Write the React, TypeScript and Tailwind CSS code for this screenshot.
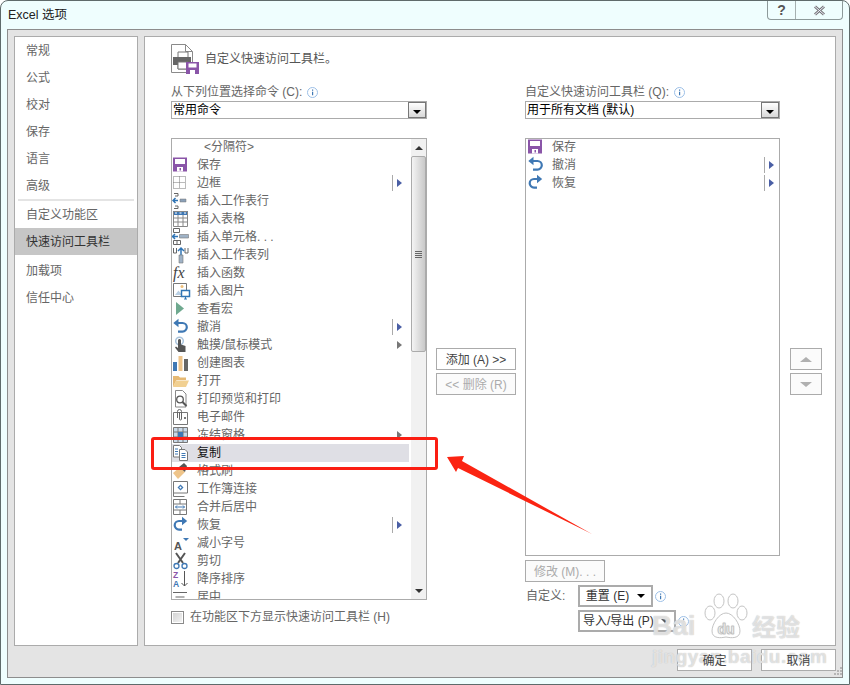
import React from 'react';

const FONT = '"Liberation Sans", "Noto Sans CJK SC", sans-serif';

const Svg = ({ children }: { children: React.ReactNode }) => (
  <svg width="20" height="18" viewBox="0 0 20 18" fill="none" className="block shrink-0">
    {children}
  </svg>
);

const SaveIcon = () => (
  <Svg>
    <path d="M1 1.500h14v14H1z" fill="#8a55a8" />
    <path d="M3 3h10v5H3z" fill="#fff" />
    <path d="M5 11h6v4.500H5z" fill="#fff" />
    <path d="M7.500 12h1.500v2.500H7.500z" fill="#8a55a8" />
  </Svg>
);
const BorderIcon = () => (
  <Svg>
    <path d="M1.500 2.500h12v12h-12zM7.500 2.500v12M1.500 8.500h12" stroke="#777" strokeDasharray="1 1" />
  </Svg>
);
const InsertRowIcon = () => (
  <Svg>
    <path d="M2 1.500h4v2.500H3M3 14h3v2.500H2" stroke="#666" />
    <path d="M1 8.500h5M3.500 6L1 8.500 3.500 11" stroke="#2f74b5" strokeWidth="1.500" />
    <path d="M8 7h6v3H8z" fill="#8aa0b8" stroke="#777" strokeWidth="0.500" />
  </Svg>
);
const TableIcon = () => (
  <Svg>
    <path d="M1 1h15v4H1z" fill="#3f78b4" />
    <path d="M1.500 1.500h14v15h-14zM1.500 8h14M1.500 12h14M6 5v11M11 5v11" stroke="#888" />
    <path d="M3 2.500h2v1H3zM7.500 2.500h2v1h-2zM12 2.500h2v1h-2z" fill="#fff" />
  </Svg>
);
const InsertCellIcon = () => (
  <Svg>
    <path d="M1.500 .5h6v4h-6zM1.500 12.500h7v4h-7zM5 12.500v4" stroke="#666" />
    <path d="M0 8.500h6M3 6L.5 8.500 3 11" stroke="#2f74b5" strokeWidth="1.500" />
    <path d="M7.500 6.500h9v3.500h-9z" fill="#9fb2c6" stroke="#777" strokeWidth="0.600" />
  </Svg>
);
const InsertColIcon = () => (
  <Svg>
    <path d="M1.500 2v5h3V2M13 2v5h3V2" stroke="#666" />
    <path d="M9 10V2M6 5l3-3 3 3" stroke="#2f74b5" strokeWidth="1.500" />
    <path d="M7 9h4v8H7z" fill="#9fb2c6" stroke="#777" strokeWidth="0.600" />
  </Svg>
);
const FxIcon = () => (
  <Svg>
    <text x="1" y="14" fontFamily='"Liberation Serif", serif' fontStyle="italic" fontSize="16" fill="#444">
      fx
    </text>
  </Svg>
);
const PictureIcon = () => (
  <Svg>
    <path d="M1.500 1.500h13v13h-13z" stroke="#777" fill="#fff" />
    <path d="M3 13l3.500-4.500L10 13z" fill="#b8cfe4" />
    <circle cx="10" cy="4.500" r="1.500" fill="#eebf7a" />
    <path d="M9.500 8.500h8v6h-8z" fill="#fff" stroke="#2f74b5" strokeWidth="1.500" />
    <path d="M12 17h3M13.500 14.500V17" stroke="#2f74b5" />
  </Svg>
);
const PlayIcon = () => (
  <Svg>
    <path d="M4 2l8 6.500L4 15z" fill="#6fa98f" />
  </Svg>
);
const UndoIcon = () => (
  <Svg>
    <path d="M3 5h7.500a4.300 4.300 0 0 1 0 8.600H6" stroke="#3f78b4" strokeWidth="2.200" />
    <path d="M6.500 0.800L1.300 5l5.200 4.300z" fill="#3f78b4" />
  </Svg>
);
const TouchIcon = () => (
  <Svg>
    <circle cx="7.500" cy="5" r="3.800" stroke="#a9c3dc" strokeWidth="1.500" />
    <path d="M6 4.500c0-2 3-2 3 0v4l4.500 1.500V16H6.500L3 11.500l1-1L6 12z" fill="#555" />
  </Svg>
);
const ChartIcon = () => (
  <Svg>
    <path d="M1 8h4v9H1z" fill="#3f78b4" />
    <path d="M6.500 2h4v15h-4z" fill="#eec48a" />
    <path d="M12 5h4v12h-4z" fill="#666" />
  </Svg>
);
const OpenIcon = () => (
  <Svg>
    <path d="M1 4h5.500l1.500 1.500h6V8H4.500L1 15z" fill="#e6b973" />
    <path d="M4 8.500h13l-3 6.500H1z" fill="#f1d092" />
  </Svg>
);
const PreviewIcon = () => (
  <Svg>
    <path d="M3.500 .5h7l3.500 3.500v13h-10.500z" stroke="#888" fill="#fff" />
    <circle cx="8" cy="9.500" r="3.300" stroke="#555" strokeWidth="1.300" />
    <path d="M10.500 12l4 4" stroke="#555" strokeWidth="2" />
  </Svg>
);
const MailIcon = () => (
  <Svg>
    <path d="M1.500 4.500h14v12h-14z" stroke="#777" fill="#fff" />
    <path d="M5.500 10V3.500a2 2 0 0 1 4 0V11a1 1 0 0 1-2 0V4" stroke="#666" />
    <path d="M12 9h2v2h-2z" fill="#777" />
  </Svg>
);
const FreezeIcon = () => (
  <Svg>
    <path d="M1.500 1.500h14v15h-14z" stroke="#777" fill="#c9d9e8" />
    <path d="M1.500 6h14M1.500 11h14M6 1.500v15M11 1.500v15" stroke="#777" />
    <path d="M6 6h5v5H6z" fill="#3f78b4" />
  </Svg>
);
const CopyIcon = () => (
  <Svg>
    <path d="M1.500 1.500h6l2 2V13h-8z" stroke="#777" fill="#fff" />
    <path d="M7.500 5.500h5.500l2.500 2.500v8.500h-8z" stroke="#777" fill="#fff" />
    <path d="M9.500 9.500h4M9.500 11.500h4M9.500 13.500h4M3 5h3M3 7.500h3M3 10h3" stroke="#3f78b4" />
  </Svg>
);
const BrushIcon = () => (
  <Svg>
    <path d="M1 11l7-6 5 5-7 7z" fill="#eec48a" />
    <path d="M7 5l5-4 3 3-2 6z" fill="#555" />
  </Svg>
);
const WorkbookIcon = () => (
  <Svg>
    <path d="M1.500 1.500h14v11.500h-14zM1.500 13v3.500h11" stroke="#777" />
    <path d="M8.500 4.500l3 3-3 3-3-3z" fill="#3f78b4" />
    <path d="M8.500 6.300l1.200 1.200-1.200 1.200-1.200-1.200z" fill="#fff" />
  </Svg>
);
const MergeIcon = () => (
  <Svg>
    <path d="M1.500 1.500h13v15h-13zM1.500 6h13M1.500 12h13M8 1.500V6M8 12v4.500" stroke="#777" />
    <path d="M3.500 9h9M5 7.500L3.500 9 5 10.500M11 7.500L12.500 9 11 10.500" stroke="#3f78b4" />
  </Svg>
);
const RedoIcon = () => (
  <Svg>
    <path d="M13 5H7a4.300 4.300 0 0 0 0 8.600h3" stroke="#3f78b4" strokeWidth="2.200" />
    <path d="M10 0.800L15.200 5 10 9.300z" fill="#3f78b4" />
  </Svg>
);
const ShrinkFontIcon = () => (
  <Svg>
    <text x="2" y="16" fontFamily='"Liberation Sans", sans-serif' fontWeight="700" fontSize="11" fill="#555">
      A
    </text>
    <path d="M11 4h6l-3 3z" fill="#3f78b4" />
  </Svg>
);
const ScissorsIcon = () => (
  <Svg>
    <path d="M4 1l7 10M13 1L6 11" stroke="#555" strokeWidth="2" />
    <circle cx="4.500" cy="14" r="2.500" stroke="#3f78b4" strokeWidth="1.300" />
    <circle cx="12.500" cy="14" r="2.500" stroke="#3f78b4" strokeWidth="1.300" />
  </Svg>
);
const SortIcon = () => (
  <Svg>
    <text x="1" y="8" fontFamily='"Liberation Sans", sans-serif' fontWeight="700" fontSize="8.500" fill="#8a55a8">
      Z
    </text>
    <text x="1" y="17" fontFamily='"Liberation Sans", sans-serif' fontWeight="700" fontSize="8.500" fill="#3f78b4">
      A
    </text>
    <path d="M12.500 1v15M9.500 13l3 3 3-3" stroke="#555" />
  </Svg>
);
const CenterIcon = () => (
  <Svg>
    <path d="M1 4.500h14M3.500 9h9M1 13.500h14" stroke="#666" strokeWidth="1.200" />
  </Svg>
);

const InfoIcon = () => (
  <svg width="11" height="11" viewBox="0 0 11 11" className="block shrink-0">
    <circle cx="5.500" cy="5.500" r="5" fill="#fff" stroke="#9cbfe6" />
    <path d="M5 2.500h1.200v1.200H5zM5 4.800h1.200v3.500H5z" fill="#3f78b4" />
  </svg>
);

const SubArrow = ({ line }: { line?: boolean }) => (
  <span className="flex items-center gap-[4px]">
    <span className={line ? 'h-[16px] w-px bg-[#aaaaaa]' : 'h-[16px] w-px'} />
    <span
      className={
        line
          ? 'h-0 w-0 border-y-[4px] border-l-[5px] border-y-transparent border-l-[#4a5fa5]'
          : 'h-0 w-0 border-y-[4px] border-l-[5px] border-y-transparent border-l-[#777777]'
      }
    />
  </span>
);

type Row = {
  label: string;
  icon?: React.ReactNode;
  sub?: 'line' | 'plain';
  active?: boolean;
  indent?: boolean;
};

const commands: Row[] = [
  { label: '<分隔符>', indent: true },
  { label: '保存', icon: <SaveIcon /> },
  { label: '边框', icon: <BorderIcon />, sub: 'line' },
  { label: '插入工作表行', icon: <InsertRowIcon /> },
  { label: '插入表格', icon: <TableIcon /> },
  { label: '插入单元格. . .', icon: <InsertCellIcon /> },
  { label: '插入工作表列', icon: <InsertColIcon /> },
  { label: '插入函数', icon: <FxIcon /> },
  { label: '插入图片', icon: <PictureIcon /> },
  { label: '查看宏', icon: <PlayIcon /> },
  { label: '撤消', icon: <UndoIcon />, sub: 'line' },
  { label: '触摸/鼠标模式', icon: <TouchIcon />, sub: 'plain' },
  { label: '创建图表', icon: <ChartIcon /> },
  { label: '打开', icon: <OpenIcon /> },
  { label: '打印预览和打印', icon: <PreviewIcon /> },
  { label: '电子邮件', icon: <MailIcon /> },
  { label: '冻结窗格', icon: <FreezeIcon />, sub: 'plain' },
  { label: '复制', icon: <CopyIcon />, active: true },
  { label: '格式刷', icon: <BrushIcon /> },
  { label: '工作簿连接', icon: <WorkbookIcon /> },
  { label: '合并后居中', icon: <MergeIcon /> },
  { label: '恢复', icon: <RedoIcon />, sub: 'line' },
  { label: '减小字号', icon: <ShrinkFontIcon /> },
  { label: '剪切', icon: <ScissorsIcon /> },
  { label: '降序排序', icon: <SortIcon /> },
  { label: '居中', icon: <CenterIcon /> },
];

const toolbarItems: Row[] = [
  { label: '保存', icon: <SaveIcon /> },
  { label: '撤消', icon: <UndoIcon />, sub: 'line' },
  { label: '恢复', icon: <RedoIcon />, sub: 'line' },
];

const sideTop = ['常规', '公式', '校对', '保存', '语言', '高级'];

const CommandRow = ({ row }: { row: Row }) => (
  <div
    className={
      row.active
        ? 'flex h-[18px] shrink-0 items-center bg-[#dfdfe5] pr-[7px] text-[#111111]'
        : 'flex h-[18px] shrink-0 items-center pr-[7px] text-[#666666]'
    }
  >
    <span className={row.indent ? 'w-[32px] shrink-0' : 'w-[25px] shrink-0'}>{row.icon}</span>
    <span className="flex-1 whitespace-nowrap">{row.label}</span>
    {row.sub && <SubArrow line={row.sub === 'line'} />}
  </div>
);

const Combo = ({ value }: { value: string }) => (
  <div className="flex h-[18px] items-center justify-between border border-[#ababab] bg-white pl-px text-black">
    <span className="whitespace-nowrap">{value}</span>
    <span className="flex h-[16px] w-[18px] items-end justify-center border border-[#777777] bg-linear-to-b from-white to-[#d8d8d8] pb-[3px]">
      <span className="h-0 w-0 border-x-[4px] border-t-[4px] border-x-transparent border-t-black" />
    </span>
  </div>
);

const Label = ({ text }: { text: string }) => (
  <div className="flex h-[18px] items-center gap-[5px] text-[#666666]">
    <span className="whitespace-nowrap">{text}</span>
    <InfoIcon />
  </div>
);

const Button = ({ text, disabled, className }: { text: string; disabled?: boolean; className: string }) => (
  <div
    className={
      (disabled ? 'bg-[#fbfbfb] text-[#ababab] ' : 'bg-white text-[#444444] ') +
      'flex h-[22px] items-center justify-center whitespace-nowrap border border-[#ababab] pt-[2px] ' +
      className
    }
  >
    <span className="relative z-10">{text}</span>
  </div>
);

const MoveButton = ({ up }: { up?: boolean }) => (
  <div className="flex h-[22px] w-[32px] items-center justify-center border border-[#ababab] bg-[#fbfbfb]">
    <span
      className={
        up
          ? 'h-0 w-0 border-x-[6px] border-b-[5px] border-x-transparent border-b-[#b0b0b0]'
          : 'h-0 w-0 border-x-[6px] border-t-[5px] border-x-transparent border-t-[#b0b0b0]'
      }
    />
  </div>
);

const Scrollbar = () => (
  <div className="flex w-[15px] shrink-0 flex-col items-center bg-[#f1f1f1]">
    <div className="flex h-[17px] shrink-0 items-center justify-center">
      <span className="h-0 w-0 border-x-[4px] border-b-[4px] border-x-transparent border-b-[#333333]" />
    </div>
    <div className="flex h-[196px] w-[15px] shrink-0 flex-col items-center justify-center gap-px rounded-[2px] border border-[#ababab] bg-linear-to-r from-[#f4f4f4] to-[#c9c9c9]">
      <span className="h-px w-[7px] bg-[#666666]" />
      <span className="h-px w-[7px] bg-[#666666]" />
      <span className="h-px w-[7px] bg-[#666666]" />
      <span className="h-px w-[7px] bg-[#666666]" />
    </div>
    <div className="flex-1" />
    <div className="flex h-[17px] shrink-0 items-center justify-center">
      <span className="h-0 w-0 border-x-[4px] border-t-[4px] border-x-transparent border-t-[#333333]" />
    </div>
  </div>
);

export default function App() {
  return (
    <div
      className="relative flex h-[685px] w-[850px] flex-col overflow-hidden rounded-t-[8px] border border-[#5f6b6b] bg-[#effefe] text-[12px] leading-none"
      style={{ fontFamily: FONT }}
    >
      <div className="flex h-[28px] shrink-0 items-start justify-between pl-[7px] pr-[6px]">
        <span className="mt-[8px] whitespace-nowrap text-[12.500px] text-[#222222]">Excel 选项</span>
        <div className="flex h-[19px] w-[76px] rounded-b-[4px] border border-t-0 border-[#8d9a9a] text-[#555555]">
          <span className="flex w-[28px] items-center justify-center border-r border-[#a5b0b0] text-[14px] font-bold">
            ?
          </span>
          <span className="flex flex-1 items-center justify-center">
            <svg width="13" height="11" viewBox="0 0 13 11">
              <path d="M2 1.500l9 8M11 1.500l-9 8" stroke="#777" strokeWidth="3" />
              <path d="M2 1.500l9 8M11 1.500l-9 8" stroke="#eef" strokeWidth="1" />
            </svg>
          </span>
        </div>
      </div>

      <div className="ml-[6px] mr-[6px] flex h-[649px] shrink-0 flex-col border border-[#8d8d8d] bg-[#e4e4e4] px-[6px] pt-[6px]">
        <div className="flex h-[610px] shrink-0 gap-[6px]">
          <div className="w-[124px] shrink-0 border border-[#ababab] bg-white text-[#666666]">
            {sideTop.map((s) => (
              <div key={s} className="flex h-[27px] items-center pl-[11px]">
                {s}
              </div>
            ))}
            <div className="mx-[3px] h-[2px] bg-[#e4e4e4]" />
            <div className="flex h-[27px] items-center pl-[11px]">自定义功能区</div>
            <div className="flex h-[27px] items-center bg-[#c6c6c6] pl-[11px] text-[#333333]">快速访问工具栏</div>
            <div className="mt-[2px] flex h-[27px] items-center pl-[11px]">加载项</div>
            <div className="flex h-[27px] items-center pl-[11px]">信任中心</div>
          </div>

          <div className="flex-1 border border-[#ababab] bg-white pl-[26px] pt-[7px]">
            <div className="flex h-[39px] items-start">
              <svg width="28" height="30" viewBox="0 0 28 30" className="block shrink-0">
                <path d="M.5.5h14l7 7v21H.5z" fill="#fff" stroke="#8a8a8a" />
                <path d="M14.500.5v7h7" fill="none" stroke="#8a8a8a" />
                <path d="M7 8h10v6H7zM7 19h10v6H7z" fill="#fff" stroke="#777" />
                <path d="M2 13h18v8H2z" fill="#666" />
                <path d="M7 18h10v7H7z" fill="#fff" stroke="#777" />
                <path d="M15 18h13v12H15z" fill="#8a55a8" />
                <path d="M17.500 19.500h8v4h-8zM19 26h5v4h-5z" fill="#fff" />
              </svg>
              <span className="ml-[6px] mt-[9px] whitespace-nowrap text-[#555555]">自定义快速访问工具栏。</span>
            </div>

            <div className="flex">
              <div className="w-[256px] shrink-0">
                <Label text="从下列位置选择命令 (C):" />
                <Combo value="常用命令" />
                <div className="mt-[19px] flex h-[462px] border border-[#ababab] bg-white">
                  <div className="-mt-px flex flex-1 flex-col overflow-hidden pb-px pr-[2px]">
                    {commands.map((row) => (
                      <CommandRow key={row.label} row={row} />
                    ))}
                  </div>
                  <Scrollbar />
                </div>
                <div className="mt-[9px] flex h-[16px] items-center text-[#666666]">
                  <span className="flex h-[13px] w-[13px] items-center justify-center border border-[#8a8a8a] bg-white">
                    <span className="h-[9px] w-[9px] bg-linear-to-br from-[#d4d4d4] to-[#f2f2f2]" />
                  </span>
                  <span className="ml-[6px] whitespace-nowrap">在功能区下方显示快速访问工具栏 (H)</span>
                </div>
              </div>

              <div className="w-[98px] shrink-0 pl-[9px] pt-[265px]">
                <Button text="添加 (A) >>" className="w-[80px]" />
                <Button text="<< 删除 (R)" disabled className="mt-[3px] w-[80px]" />
              </div>

              <div className="w-[255px] shrink-0">
                <Label text="自定义快速访问工具栏 (Q):" />
                <Combo value="用于所有文档 (默认)" />
                <div className="mt-[19px] flex h-[418px] flex-col border border-[#ababab] bg-white pl-px">
                  <div className="-mr-[2px] -mt-px">
                    {toolbarItems.map((row) => (
                      <CommandRow key={row.label} row={row} />
                    ))}
                  </div>
                </div>
                <Button text="修改 (M). . ." disabled className="mt-[4px] w-[80px]" />
                <div className="mt-[3px] flex items-center">
                  <span className="w-[53px] pl-px text-[#666666]">自定义:</span>
                  <div className="flex h-[22px] w-[75px] items-center justify-center gap-[8px] border-[2px] border-[#ababab] text-[#333333]">
                    <span className="whitespace-nowrap">重置 (E)</span>
                    <span className="h-0 w-0 border-x-[4px] border-t-[4px] border-x-transparent border-t-black" />
                  </div>
                  <span className="ml-[2px]">
                    <InfoIcon />
                  </span>
                </div>
                <div className="mt-[3px] flex items-center pl-[53px]">
                  <div className="flex h-[22px] w-[98px] items-center justify-between border-[2px] border-[#ababab] pl-[3px] pr-[5px] text-[#333333]">
                    <span className="whitespace-nowrap">导入/导出 (P)</span>
                    <span className="h-0 w-0 border-x-[4px] border-t-[4px] border-x-transparent border-t-[#555555]" />
                  </div>
                  <span className="ml-[2px]">
                    <InfoIcon />
                  </span>
                </div>
              </div>

              <div className="ml-[10px] flex w-[32px] shrink-0 flex-col gap-[3px] pt-[265px]">
                <MoveButton up />
                <MoveButton />
              </div>
            </div>
          </div>
        </div>

        <div className="flex justify-end gap-[9px] pt-[3px]">
          <Button text="确定" className="w-[75px]" />
          <Button text="取消" className="w-[75px]" />
        </div>
      </div>

      {/* red annotation */}
      <div className="absolute left-[150px] top-[436px] h-[33px] w-[287px] rounded-[3px] border-[3px] border-[#fb1e13]" />
      <svg width="850" height="685" className="pointer-events-none absolute left-[-1px] top-[-1px]">
        <path d="M447 457l17-1-2 5 130 73-134-66-2 4z" fill="#fb2412" />
      </svg>

      {/* resize grip */}
      <svg width="10" height="10" viewBox="0 0 10 10" className="absolute left-[832px] top-[665px]">
        <path d="M7 1h2v2H7zM4 4h2v2H4zM7 4h2v2H7zM1 7h2v2H1zM4 7h2v2H4zM7 7h2v2H7z" fill="#b5b5b5" />
      </svg>

      {/* watermark */}
      <div className="pointer-events-none absolute left-[651px] top-[592px] flex w-[160px] flex-col text-white/60 [text-shadow:0_0_1px_#b0b0b0]">
        <div className="flex items-end">
          <span className="w-[51px] text-[28px] font-bold leading-none">Bai</span>
          <svg width="46" height="47" viewBox="0 0 46 47" className="block shrink-0">
            <g fill="#fff" fillOpacity="0.55" stroke="#c4c4c4">
              <ellipse cx="7" cy="20" rx="5" ry="7" />
              <ellipse cx="16" cy="8" rx="5" ry="7" />
              <ellipse cx="30" cy="8" rx="5" ry="7" />
              <ellipse cx="39" cy="20" rx="5" ry="7" />
              <path d="M23 20c-7 0-14 11-14 18 0 8 9 7 14 6 5 1 14 2 14-6 0-7-7-18-14-18z" />
            </g>
            <text x="23" y="41" textAnchor="middle" fontSize="14" fontWeight="700" fill="#fff" stroke="#bbb" strokeWidth="0.500">
              du
            </text>
          </svg>
          <span className="ml-[3px] whitespace-nowrap text-[24px] font-bold leading-none">经验</span>
        </div>
        <span className="mt-[7px] whitespace-nowrap text-[19px] font-bold leading-none tracking-[0.5px]">
          jingyan.baidu.com
        </span>
      </div>
    </div>
  );
}
